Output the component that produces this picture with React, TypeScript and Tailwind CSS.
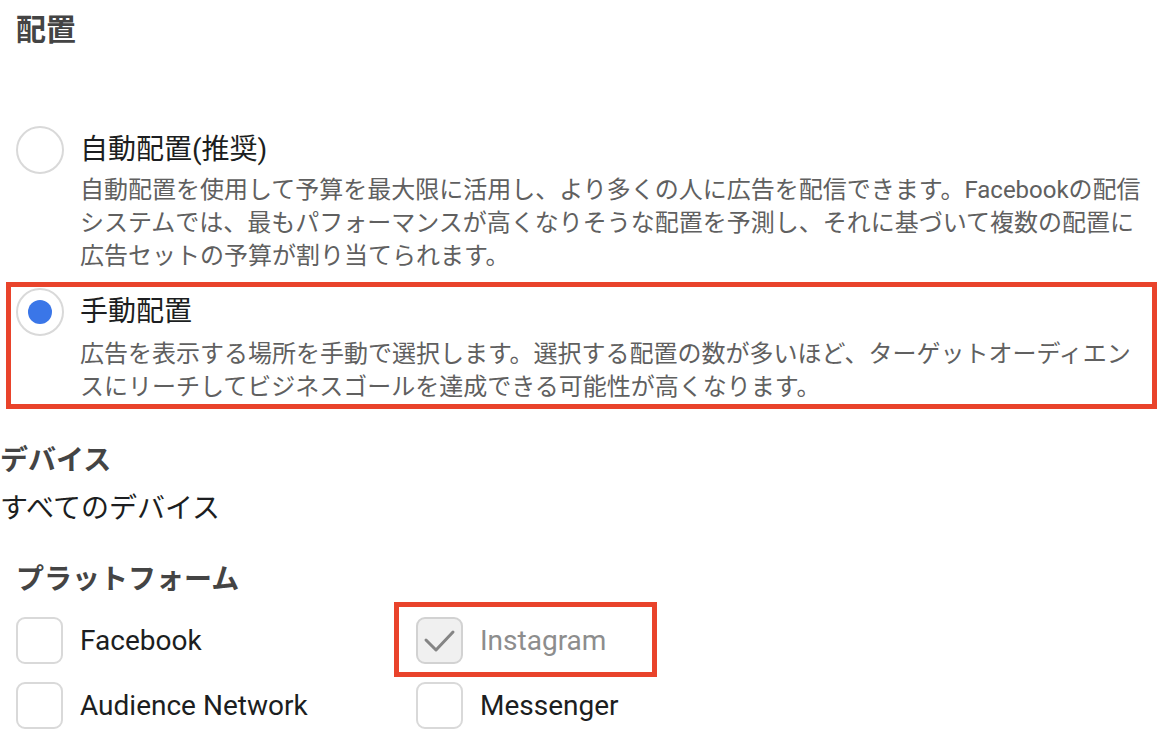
import React from "react";

const font = "font-[Roboto,'Noto_Sans_CJK_JP',sans-serif]";

function Radio({ checked }: { checked?: boolean }) {
  return (
    <span className="flex h-[48px] w-[48px] shrink-0 items-center justify-center rounded-full border-2 border-[#d9d9d9] bg-white">
      {checked && <span className="h-[24px] w-[24px] rounded-full bg-[#3a76e8]" />}
    </span>
  );
}

function Checkbox({ checked }: { checked?: boolean }) {
  return (
    <span
      className={
        checked
          ? "flex h-[47px] w-[47px] shrink-0 items-center justify-center rounded-[9px] border-2 border-[#d2d2d2] bg-[#f0f0f0]"
          : "flex h-[47px] w-[47px] shrink-0 items-center justify-center rounded-[9px] border-2 border-[#d9d9d9] bg-white"
      }
    >
      {checked && (
        <svg width="43" height="43" viewBox="0 0 43 43" fill="none">
          <polyline points="8,21 18,31 35,13" stroke="#858585" strokeWidth="3" strokeLinecap="round" strokeLinejoin="round" />
        </svg>
      )}
    </span>
  );
}

interface Option {
  title: string;
  desc: string;
  checked: boolean;
}

const options: Option[] = [
  {
    title: "自動配置(推奨)",
    desc: "自動配置を使用して予算を最大限に活用し、より多くの人に広告を配信できます。Facebookの配信システムでは、最もパフォーマンスが高くなりそうな配置を予測し、それに基づいて複数の配置に広告セットの予算が割り当てられます。",
    checked: false,
  },
  {
    title: "手動配置",
    desc: "広告を表示する場所を手動で選択します。選択する配置の数が多いほど、ターゲットオーディエンスにリーチしてビジネスゴールを達成できる可能性が高くなります。",
    checked: true,
  },
];

export default function App() {
  return (
    <div className={`min-h-screen bg-white ${font}`}>
      <h2 className="pl-[16px] pt-[10px] text-[30px] font-bold leading-[40px] text-[#444444]">配置</h2>

      <div className="mt-[70px] flex flex-col gap-[1px]">
        {options.map((opt) => (
          <div
            key={opt.title}
            className={
              opt.checked
                ? "ml-[6px] w-[1151px] border-[5px] border-[#e9432b] pl-[5px] pt-[1px]"
                : "ml-[6px] w-[1151px] border-[5px] border-transparent pb-[3px] pl-[5px] pt-[1px]"
            }
          >
            <div className="flex items-center gap-[16px]">
              <Radio checked={opt.checked} />
              <span className="text-[28px] leading-[36px] text-[#1c1e21]">{opt.title}</span>
            </div>
            <p
              className={
                opt.checked
                  ? "mt-[2px] pl-[64px] text-[24px] leading-[33px] text-[#606060]"
                  : "mt-0 pl-[64px] text-[24px] leading-[33px] text-[#606060]"
              }
            >
              {opt.desc}
            </p>
          </div>
        ))}
      </div>

      <h3 className="mt-[34px] text-[28px] font-bold leading-[36px] text-[#444444]">デバイス</h3>
      <p className="mt-[12px] text-[28px] leading-[36px] text-[#1c1e21]">すべてのデバイス</p>

      <h3 className="mt-[35px] pl-[16px] text-[28px] font-bold leading-[36px] text-[#444444]">プラットフォーム</h3>

      <div className="mt-[19px] grid grid-cols-[400px_400px] gap-y-[18px] pl-[16px]">
        <label className="flex items-center gap-[17px]">
          <Checkbox />
          <span className="text-[28px] leading-[36px] text-[#1c1e21]">Facebook</span>
        </label>
        <label className="-mb-[13px] -ml-[22px] -mt-[15px] flex w-[263px] items-center gap-[17px] justify-self-start border-[5px] border-[#e9432b] pb-[8px] pl-[17px] pt-[10px]">
          <Checkbox checked />
          <span className="text-[28px] leading-[36px] text-[#8d8d8d]">Instagram</span>
        </label>
        <label className="flex items-center gap-[17px]">
          <Checkbox />
          <span className="text-[28px] leading-[36px] text-[#1c1e21]">Audience Network</span>
        </label>
        <label className="flex items-center gap-[17px]">
          <Checkbox />
          <span className="text-[28px] leading-[36px] text-[#1c1e21]">Messenger</span>
        </label>
      </div>
    </div>
  );
}
